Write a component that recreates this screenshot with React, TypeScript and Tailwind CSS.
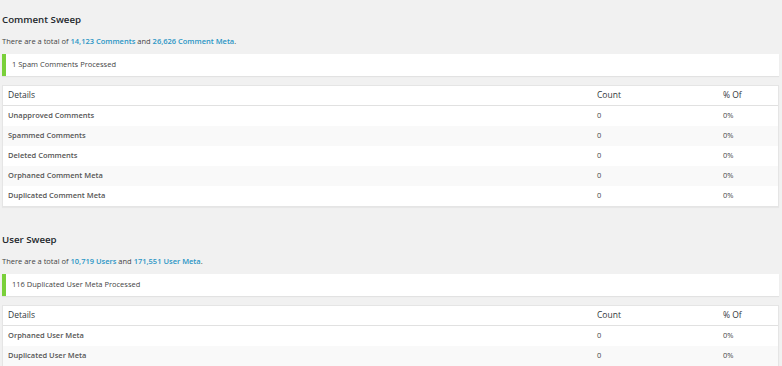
import React from 'react'

interface Row {
  label: string
  count: number
  percent: string
}

interface SweepProps {
  title: string
  firstCount: string
  firstLabel: string
  secondCount: string
  secondLabel: string
  notice: string
  rows: Row[]
}

function Sweep({ title, firstCount, firstLabel, secondCount, secondLabel, notice, rows }: SweepProps) {
  return (
    <section className="flex flex-col">
      <h2 className="h-[20px] pt-[10px] box-content text-[9.7px] leading-[20px] font-semibold text-[#23282d]">{title}</h2>
      <p className="mt-[1px] h-[20px] leading-[20px] text-[7.5px] text-[#444]">
        There are a total of <a className="text-[#2a95c5] font-semibold">{firstCount} {firstLabel}</a> and{' '}
        <a className="text-[#2a95c5] font-semibold">{secondCount} {secondLabel}</a>.
      </p>
      <div className="mt-[3px] h-[22px] flex items-center bg-white border-l-[4px] border-[#7ad03a] pl-[6px] shadow-[0_1px_1px_rgba(0,0,0,0.06)] text-[7.5px] text-[#444]">
        {notice}
      </div>
      <div className="mt-[9px] bg-white border border-[#e5e5e5] shadow-[0_1px_1px_rgba(0,0,0,0.04)] text-[7.5px] text-[#444]">
        <div className="grid grid-cols-[594px_126px_1fr] h-[20px] items-center border-b border-[#e1e1e1] text-[8.5px] text-[#32373c]">
          <span className="pl-[5px]">Details</span>
          <span>Count</span>
          <span>% Of</span>
        </div>
        {rows.map((row, i) => (
          <div
            key={row.label}
            className={`grid grid-cols-[594px_126px_1fr] h-[20px] items-center ${i % 2 === 1 ? 'bg-[#f9f9f9]' : 'bg-white'}`}
          >
            <span className="pl-[5px] font-semibold text-[#555]">{row.label}</span>
            <span>{row.count}</span>
            <span>{row.percent}</span>
          </div>
        ))}
      </div>
    </section>
  )
}

export default function App() {
  return (
    <div className="min-h-[366px] w-[782px] bg-[#f1f1f1] pl-[2px] pr-[3px] flex flex-col gap-[1px] overflow-hidden" style={{ fontFamily: '"Open Sans", sans-serif' }}>
      <Sweep
        title="Comment Sweep"
        firstCount="14,123"
        firstLabel="Comments"
        secondCount="26,626"
        secondLabel="Comment Meta"
        notice="1 Spam Comments Processed"
        rows={[
          { label: 'Unapproved Comments', count: 0, percent: '0%' },
          { label: 'Spammed Comments', count: 0, percent: '0%' },
          { label: 'Deleted Comments', count: 0, percent: '0%' },
          { label: 'Orphaned Comment Meta', count: 0, percent: '0%' },
          { label: 'Duplicated Comment Meta', count: 0, percent: '0%' },
        ]}
      />
      <div className="h-[11px]" />
      <Sweep
        title="User Sweep"
        firstCount="10,719"
        firstLabel="Users"
        secondCount="171,551"
        secondLabel="User Meta"
        notice="116 Duplicated User Meta Processed"
        rows={[
          { label: 'Orphaned User Meta', count: 0, percent: '0%' },
          { label: 'Duplicated User Meta', count: 0, percent: '0%' },
        ]}
      />
    </div>
  )
}
